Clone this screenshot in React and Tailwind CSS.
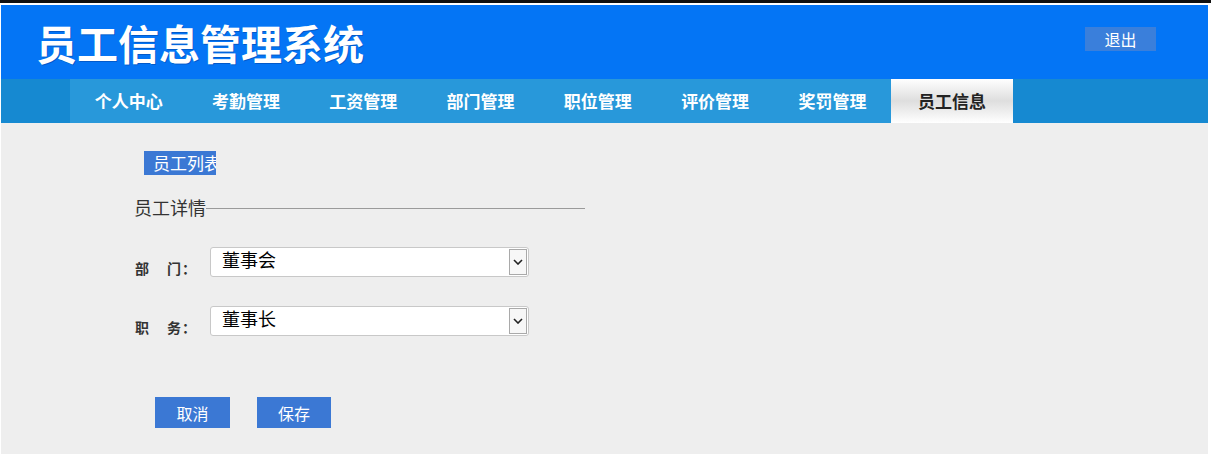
const navItems = ['个人中心', '考勤管理', '工资管理', '部门管理', '职位管理', '评价管理', '奖罚管理', '员工信息']

function Field({ label, value }) {
  return (
    <div className="flex items-end">
      <label className="flex w-[75px] pb-[1px] text-[14px] font-bold leading-[16px] text-[#333]">
        <span>{label[0]}</span>
        <span className="ml-[18px]">{label[1]}</span>
        <span className="ml-px">：</span>
      </label>
      <div className="flex h-[30px] w-[319px] rounded-[3px] border border-[#c8c8c8] bg-white">
        <select
          defaultValue={value}
          className="h-full flex-1 appearance-none bg-transparent pl-[11px] pb-[6px] text-[18px] leading-[22px] text-black outline-none"
        >
          <option>{value}</option>
        </select>
        <span className="my-[1px] mr-[1px] flex w-[18px] items-center justify-center border border-[#a9a9a9] bg-[#f7f7f7]">
          <svg viewBox="0 0 10 6" className="h-[6px] w-[10px]" fill="none" stroke="#222" strokeWidth="1.6">
            <path d="M1 1l4 4 4-4" />
          </svg>
        </span>
      </div>
    </div>
  )
}

export default function App() {
  return (
    <div
      className="h-[454px] w-[1211px] overflow-hidden border-t-[3px] border-[#111] bg-white pt-[2px] pl-px pr-[3px]"
      style={{ fontFamily: '"Noto Sans CJK SC", "Noto Sans", sans-serif' }}
    >
      <header className="flex h-[74px] items-center justify-between bg-[#0475f5] pl-[35px] pr-[52px]">
        <h1
          className="text-[41px] font-bold leading-none text-white"
          style={{ textShadow: '1px 1px 0 rgba(0,40,120,0.35)' }}
        >
          员工信息管理系统
        </h1>
        <button
          type="button"
          className="-mt-[6px] h-[24px] w-[71px] bg-[#3a7fdb] text-[16px] leading-[24px] text-white"
        >
          退出
        </button>
      </header>

      <nav className="flex h-[44px] bg-[#1689d1]">
        <ul className="ml-[69px] flex bg-[#2898da]">
          {navItems.map((item, i) => {
            const active = i === navItems.length - 1
            return (
              <li
                key={item}
                className={
                  active
                    ? 'flex w-[122px] items-center justify-center bg-gradient-to-b from-white via-[#dedede] to-white text-[17px] font-bold text-[#222]'
                    : 'flex w-[117.3px] items-center justify-center text-[17px] font-bold text-white'
                }
              >
                {item}
              </li>
            )
          })}
        </ul>
      </nav>

      <main className="h-[331px] bg-[#eeeeee] pl-[133px] pt-[28px]">
        <button
          type="button"
          className="ml-[10px] block h-[24px] w-[72px] overflow-hidden whitespace-nowrap bg-[#3b78d4] pl-[9px] text-left text-[17px] leading-[24px] text-white"
        >
          员工列表
        </button>

        <div className="mt-[21px] flex w-[451px] items-center">
          <span className="text-[18px] leading-[22px] text-[#333]">员工详情</span>
          <span className="mt-[2px] h-px flex-1 bg-[#9a9a9a]" />
        </div>

        <div className="mt-[29px] flex flex-col gap-[29px] pl-px">
          <Field label="部门" value="董事会" />
          <Field label="职务" value="董事长" />
        </div>

        <div className="mt-[61px] flex gap-[27px] pl-[21px]">
          <button type="button" className="h-[31px] w-[75px] bg-[#3b78d4] text-[16px] text-white">
            取消
          </button>
          <button type="button" className="h-[31px] w-[74px] bg-[#3b78d4] text-[16px] text-white">
            保存
          </button>
        </div>
      </main>
    </div>
  )
}
